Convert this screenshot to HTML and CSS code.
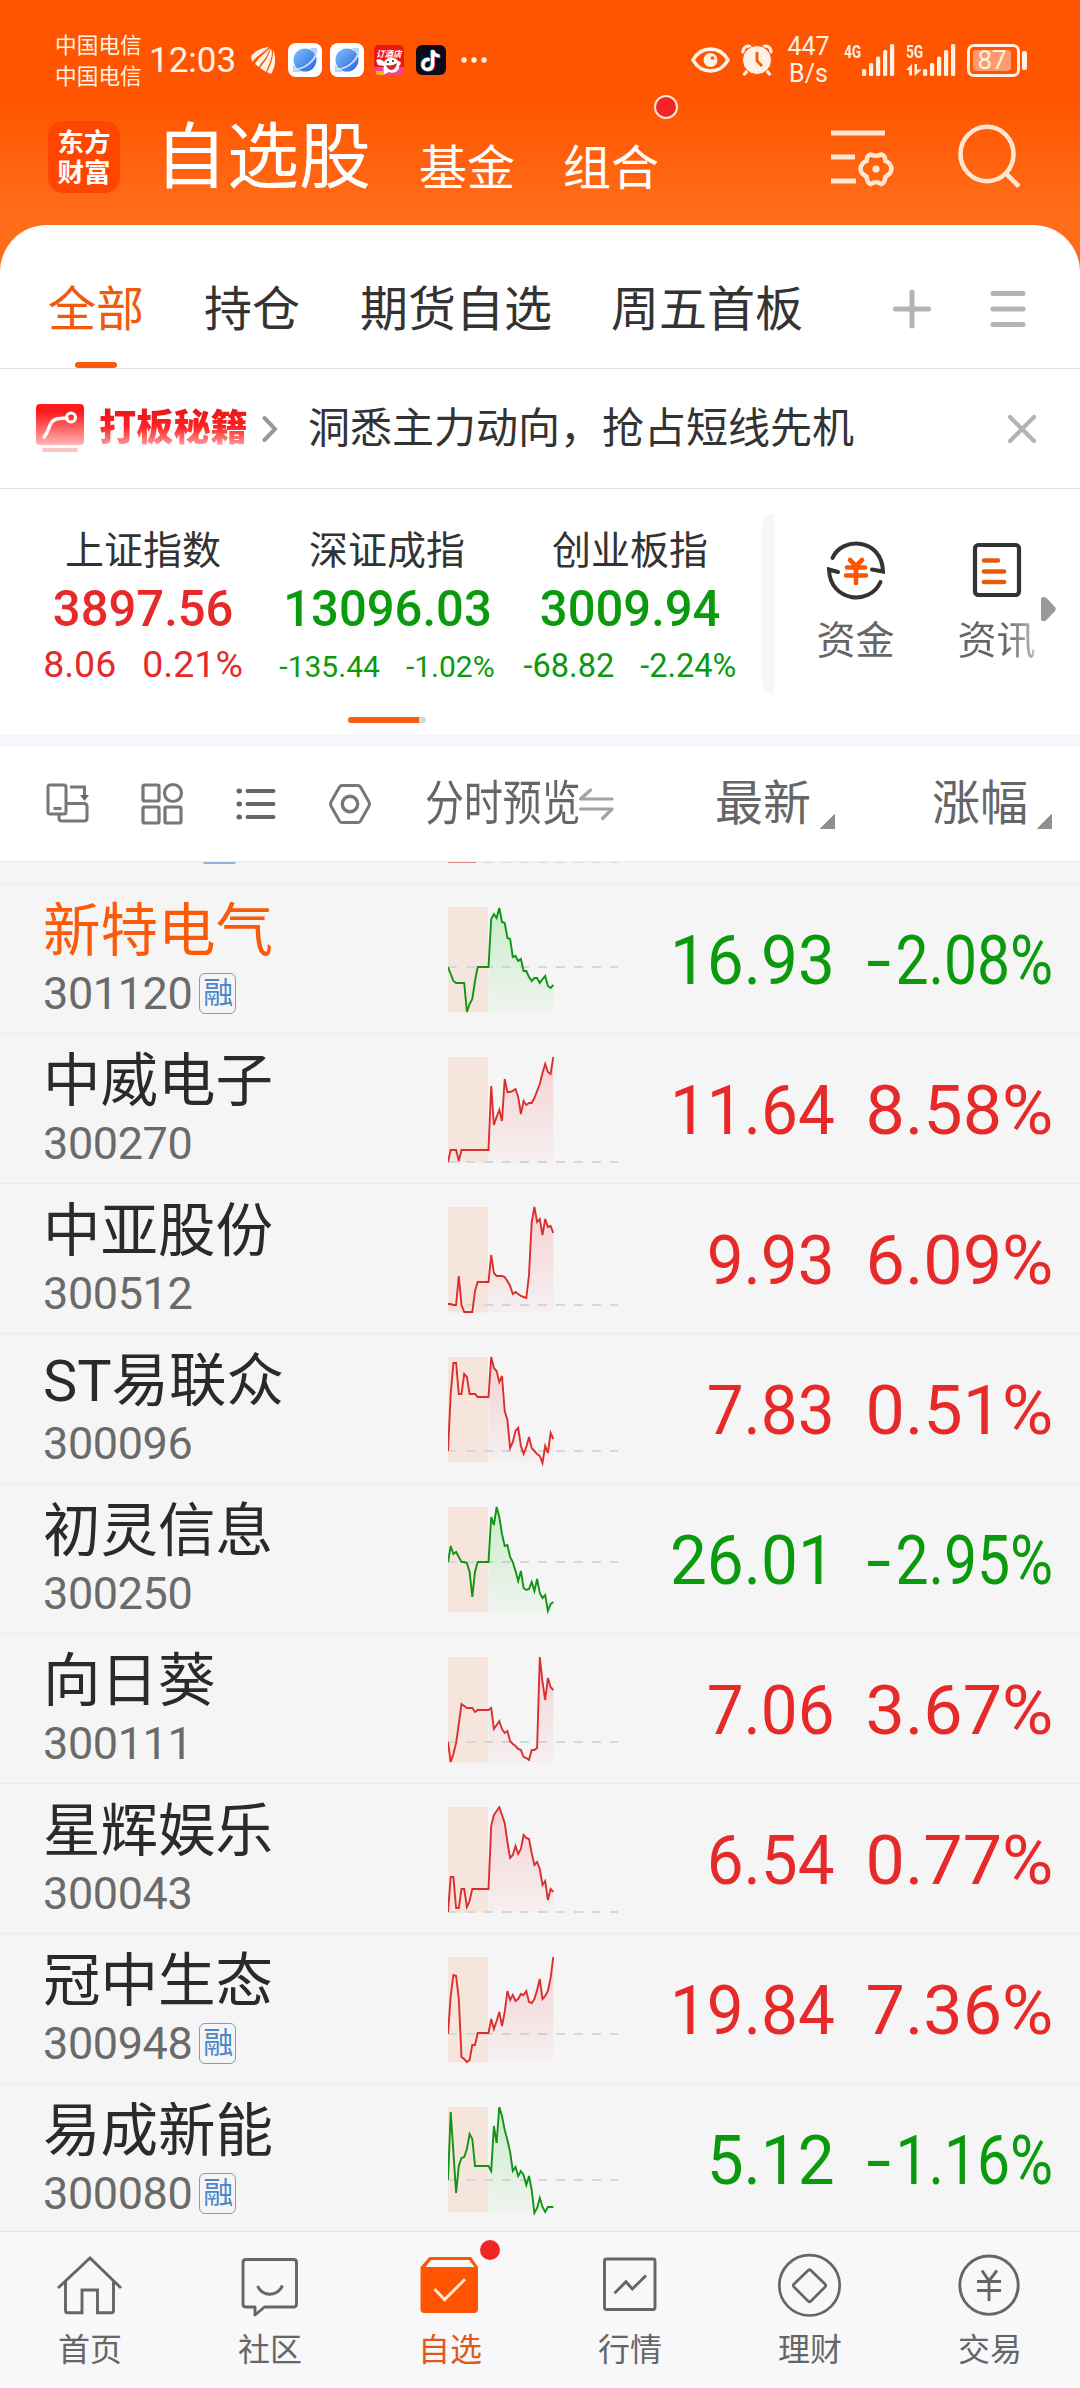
FILE: index.html
```html
<!DOCTYPE html>
<html lang="zh-CN">
<head>
  <meta charset="utf-8">
  <title>自选股</title>
  <link rel="stylesheet" href="styles.css">
</head>
<body>
  <div class="top">
    <div class="statusbar">
      <div class="carrier"><span>中国电信</span><span>中国电信</span></div>
      <span class="clock">12:03</span>
      <svg class="st-wing" width="24" height="28" viewBox="0 0 24 28" fill="#fff1e4">
        <path d="M0 10C6 3 12 2 18 1C13 6 6 10 1 16Z"/>
        <path d="M4 18C7 12 14 7 19 2C17 11 11 15 8 21Z"/>
        <path d="M9 22C13 16 18 11 20 2C23 9 18 18 15 26Z"/>
        <path d="M16 26C20 18 22 13 22 4C26 12 24 22 20 28Z"/>
      </svg>
      <svg class="st-app" width="34" height="34" viewBox="0 0 34 34">
        <rect width="34" height="34" rx="8" fill="#fff"/>
        <path d="M22 5h7v8zM5 22v7h8z" fill="#b9d0f8"/>
        <circle cx="17" cy="17" r="11.5" fill="url(#globe)"/>
        <path d="M6 26C16 27 27 18 29 8" fill="none" stroke="#cfe3ff" stroke-width="1.8"/>
        <defs>
          <linearGradient id="globe" x1="0" y1="0" x2="1" y2="1">
            <stop offset="0" stop-color="#7cc4ff"/><stop offset="1" stop-color="#2b62d9"/>
          </linearGradient>
        </defs>
      </svg>
      <svg class="st-app" width="34" height="34" viewBox="0 0 34 34">
        <rect width="34" height="34" rx="8" fill="#fff"/>
        <path d="M22 5h7v8zM5 22v7h8z" fill="#b9d0f8"/>
        <circle cx="17" cy="17" r="11.5" fill="url(#globe)"/>
        <path d="M6 26C16 27 27 18 29 8" fill="none" stroke="#cfe3ff" stroke-width="1.8"/>
      </svg>
      <svg class="st-shop" width="30" height="30" viewBox="0 0 30 30">
        <defs><clipPath id="shop"><rect width="30" height="30" rx="5"/></clipPath></defs>
        <g clip-path="url(#shop)">
          <rect width="30" height="30" fill="#f01414"/>
          <path d="M0 22h30v8H0z" fill="#f0468c"/>
          <text x="2" y="12" class="shop-text">订酒店</text>
          <path d="M2 15C5 13 9 15 10 17C12 12 21 11 24 16C27 16 28 19 25 21C26 26 20 29 15 27L9 30C10 26 9 24 10 21L4 20Z" fill="#fff"/>
          <path d="M12 20C16 21 20 20 23 18C22 23 20 25 17 25C14 24 13 23 12 20Z" fill="#d8262e"/>
          <circle cx="14" cy="17" r="1" fill="#222"/><circle cx="19" cy="16" r="1" fill="#222"/>
          <path d="M2 26h8v4H2z" fill="#f7b413"/>
        </g>
      </svg>
      <svg class="st-tiktok" width="30" height="30" viewBox="0 0 30 30" fill="none" stroke-width="3.2">
        <rect width="30" height="30" rx="6" fill="#0d0b1a"/>
        <path d="M13 14C8 13.500 5.500 17 6.500 21C8 25.500 15.500 25 16 19V5C17 8.500 19.500 10.500 23 10.500" stroke="#25e5e0"/>
        <path d="M14.500 15C9.500 14.500 7 18 8 22C9.500 26.500 17 26 17.500 20V6C18.500 9.500 21 11.500 24.500 11.500" stroke="#fb2d55"/>
        <path d="M13.700 14.500C8.700 14 6.200 17.500 7.200 21.500C8.700 26 16.200 25.500 16.700 19.500V5.500C17.700 9 20.200 11 23.700 11" stroke="#fff"/>
      </svg>
      <svg class="st-more" width="28" height="8" viewBox="0 0 28 8" fill="#fff1e4">
        <circle cx="4" cy="4" r="2.700"/><circle cx="14" cy="4" r="2.700"/><circle cx="24" cy="4" r="2.700"/>
      </svg>

      <div class="status-right">
        <svg width="39" height="26" viewBox="0 0 39 26">
          <path d="M2 13C10 -1.500 29 -1.500 37 13C29 27.500 10 27.500 2 13Z" fill="none" stroke="#fff1e4" stroke-width="3.600"/>
          <circle cx="19.500" cy="13" r="7" fill="#fff1e4"/>
          <circle cx="21.500" cy="11" r="1.800" fill="#ff5500"/>
        </svg>
        <svg class="st-alarm" width="32" height="32" viewBox="0 0 32 32">
          <g stroke="#fff1e4" stroke-width="3.200" stroke-linecap="round" fill="none">
            <path d="M2 8C2 3 6 1.500 9 2.500M30 8C30 3 26 1.500 23 2.500M7 26L3.500 30M25 26L28.500 30"/>
          </g>
          <circle cx="16" cy="16" r="14.500" fill="#fff1e4" stroke="#ff5500"/>
          <path d="M16 8v9l5 5" fill="none" stroke="#ff5500" stroke-width="2.800"/>
        </svg>
        <div class="speed"><span>447</span><span>B/s</span></div>
        <div class="signal">
          <span class="net">4G</span>
          <svg width="33" height="32" viewBox="0 0 33 32" fill="#fff1e4">
            <rect x="0" y="25" width="4.200" height="7" rx="1.500"/><rect x="7" y="19" width="4.200" height="13" rx="1.500"/><rect x="14" y="12.500" width="4.200" height="19.500" rx="1.500"/><rect x="21" y="6" width="4.200" height="26" rx="1.500"/><rect x="28" y="0" width="4.200" height="32" rx="1.500"/>
          </svg>
        </div>
        <div class="signal signal-5g">
          <div class="net-box">
            <span class="net">5G</span>
            <svg width="16" height="12" viewBox="0 0 16 12" fill="#fff1e4"><path d="M0 6L6 0V11.500H3.200V6ZM8.500 0H11V5.500H16L8.500 12Z"/></svg>
          </div>
          <svg width="33" height="32" viewBox="0 0 33 32" fill="#fff1e4">
            <rect x="0" y="25" width="4.200" height="7" rx="1.500"/><rect x="7" y="19" width="4.200" height="13" rx="1.500"/><rect x="14" y="12.500" width="4.200" height="19.500" rx="1.500"/><rect x="21" y="6" width="4.200" height="26" rx="1.500"/><rect x="28" y="0" width="4.200" height="32" rx="1.500"/>
          </svg>
        </div>
        <div class="battery"><span>87</span></div>
        <i class="battery-tip"></i>
      </div>
    </div>

    <div class="header">
      <div class="logo"><span>东方</span><span>财富</span></div>
      <span class="title">自选股</span>
      <span class="nav nav-fund">基金</span>
      <span class="nav nav-group">组合<i class="dot"></i></span>
      <svg class="ic-filter" width="64" height="60" viewBox="0 0 64 60" fill="none" stroke="#ffe6d2">
        <path d="M0 5H54M0 29H24M0 53H25" stroke-width="5"/>
        <path d="M40 26.500Q45 29 50 26.500Q54 27 54.500 33Q60 35 60.500 41Q60 46 54.500 48.500Q54 55 50 56Q45 52.500 40 56Q36 55 35.500 48.500Q30 46 29.500 41Q30 35 35.500 33Q36 27 40 26.500Z" stroke-width="4.500"/>
        <circle cx="45" cy="41" r="3.600" fill="#ffe6d2" stroke="none"/>
      </svg>
      <svg class="ic-search" width="64" height="66" viewBox="0 0 64 66" fill="none" stroke="#ffe6d2" stroke-width="4.600">
        <ellipse cx="29" cy="30" rx="26.500" ry="27.200"/>
        <path d="M47.500 49L61 62.500"/>
      </svg>
    </div>
  </div>

  <div class="sheet">
    <div class="tabs">
      <span class="tab active">全部</span>
      <span class="tab">持仓</span>
      <span class="tab">期货自选</span>
      <span class="tab">周五首板</span>
      <svg class="ic-plus" width="40" height="40" viewBox="0 0 40 40" stroke="#b3b3b3" stroke-width="5" stroke-linecap="round"><path d="M20 3V37M3.500 20H36.500"/></svg>
      <svg class="ic-menu" width="36" height="40" viewBox="0 0 36 40" stroke="#b3b3b3" stroke-width="5" stroke-linecap="round"><path d="M3 4.500H33M3 20H33M3 35.500H33"/></svg>
    </div>

    <div class="banner">
      <svg class="ic-secret" width="48" height="48" viewBox="0 0 48 48">
        <defs>
          <linearGradient id="secret" x1="0" y1="0" x2="0" y2="1">
            <stop offset=".2" stop-color="#ff1a1e"/><stop offset="1" stop-color="#ffb4b4"/>
          </linearGradient>
        </defs>
        <rect width="48" height="41" rx="4" fill="url(#secret)"/>
        <path d="M8 33C14 27 12 15 24 14.500L31 14" fill="none" stroke="#fff" stroke-width="3.400" stroke-linecap="round"/>
        <circle cx="35" cy="13.500" r="4.500" fill="none" stroke="#fff" stroke-width="3"/>
        <rect x="6" y="44" width="36" height="4" rx="2" fill="#f9c4c4"/>
      </svg>
      <span class="banner-tag">打板秘籍</span>
      <svg class="ic-chevron" width="16" height="28" viewBox="0 0 16 28" fill="none" stroke="#999" stroke-width="4" stroke-linecap="round"><path d="M2.500 3L13 14L2.500 25"/></svg>
      <span class="banner-text">洞悉主力动向，抢占短线先机</span>
      <svg class="ic-close" width="30" height="30" viewBox="0 0 30 30" stroke="#b3b3b3" stroke-width="4.200" stroke-linecap="round"><path d="M3 3L27 27M27 3L3 27"/></svg>
    </div>

    <div class="indices">
      <div class="index up">
        <span class="index-name">上证指数</span>
        <span class="index-value">3897.56</span>
        <span class="index-change">8.06<b>0.21%</b></span>
      </div>
      <div class="index down">
        <span class="index-name">深证成指</span>
        <span class="index-value">13096.03</span>
        <span class="index-change small">-135.44<b>-1.02%</b></span>
      </div>
      <div class="index down">
        <span class="index-name">创业板指</span>
        <span class="index-value">3009.94</span>
        <span class="index-change medium">-68.82<b>-2.24%</b></span>
      </div>
      <i class="index-divider"></i>
      <div class="shortcut">
        <svg width="64" height="64" viewBox="0 0 64 64" fill="none">
          <path d="M8.500 20C18 -2 58 0 59 33.500L48 31.500" stroke="#333" stroke-width="4" stroke-linecap="round"/>
          <path d="M56.500 44C46 68 6 64 5 31.500L14 34" stroke="#333" stroke-width="4" stroke-linecap="round"/>
          <path d="M26 22L32 28L38 22M23 29.500H41M22 37.500H42M32 28V45" stroke="#ff5500" stroke-width="4.600" stroke-linecap="round"/>
        </svg>
        <span>资金</span>
      </div>
      <div class="shortcut shortcut-news">
        <svg width="64" height="64" viewBox="0 0 64 64" fill="none">
          <rect x="10" y="7" width="44" height="50" rx="3.500" stroke="#333" stroke-width="4.200"/>
          <path d="M19 22.500H33M19 33.500H39M19 44H39" stroke="#e8590f" stroke-width="4.600" stroke-linecap="round"/>
        </svg>
        <span>资讯</span>
      </div>
      <svg class="ic-next" width="15" height="24" viewBox="0 0 15 24" fill="#999"><path d="M0 2Q0 0 3 0Q5 0 6 1.500L14 10Q15.500 12 14 14L6 22.500Q5 24 3 24Q0 24 0 22Z"/></svg>
      <i class="pager"></i>
    </div>

    <div class="toolbar">
      <svg class="tool" width="44" height="44" viewBox="0 0 44 44" fill="none" stroke="#777" stroke-width="3">
        <rect x="2" y="3" width="18" height="29" rx="2"/><path d="M7.500 26.500H15.500M13 33V36Q13 39 16 39H38Q41 39 41 36V24.500Q41 21.500 38 21.500H21"/><path d="M24 5H38.500V14"/><path d="M34 13H43L38.500 19Z" fill="#666" stroke="none"/>
      </svg>
      <svg class="tool" width="44" height="44" viewBox="0 0 44 44" fill="none" stroke="#777" stroke-width="3.200">
        <rect x="3" y="3" width="16" height="16" rx="1.500"/><circle cx="33" cy="11" r="8.500"/><rect x="3" y="25" width="16" height="16" rx="1.500"/><rect x="25" y="25" width="16" height="16" rx="1.500"/>
      </svg>
      <svg class="tool" width="44" height="44" viewBox="0 0 44 44" fill="none" stroke="#666" stroke-width="4" stroke-linecap="round">
        <path d="M13.500 9H39.500M13.500 22H39.500M13.500 35H39.500"/><path d="M5 9H5.500M5 22H5.500M5 35H5.500" stroke-width="5"/>
      </svg>
      <svg class="tool" width="44" height="44" viewBox="0 0 44 44" fill="none" stroke="#777" stroke-width="3">
        <path d="M14 3.500H30Q31.500 3.500 32.500 5L41 20Q42 22 41 24L32.500 39Q31.500 40.500 30 40.500H14Q12.500 40.500 11.500 39L3 24Q2 22 3 20L11.500 5Q12.500 3.500 14 3.500Z"/><circle cx="22" cy="22" r="7.700" stroke-width="3.400"/>
      </svg>
      <span class="preview">分时预览</span>
      <svg class="ic-swap" width="36" height="34" viewBox="0 0 36 34" fill="none" stroke="#a3a3a3" stroke-width="3.200" stroke-linecap="round" stroke-linejoin="round"><path d="M12.500 3L2.500 12H34M2.500 22H34L24.500 31.500"/></svg>
      <span class="sort sort-price">最新</span>
      <i class="corner"></i>
      <span class="sort sort-rate">涨幅</span>
      <i class="corner"></i>
    </div>

    <div class="list">
      <div class="cut-row"><i class="cut-badge"></i><i class="cut-line"></i><i class="cut-dash"></i></div>
      <div id="stocks"></div>
    </div>
  </div>

  <div class="tabbar">
    <div class="tabbar-item">
      <svg width="70" height="70" viewBox="0 0 70 70" fill="none" stroke="#666" stroke-width="2.900"><path d="M3 38L35 8L66 38M10.500 31V60.500Q10.500 62.700 12.500 62.700H27V40H42.500V62.700H56.500Q58.500 62.700 58.500 60.500V31"/></svg>
      <span>首页</span>
    </div>
    <div class="tabbar-item">
      <svg width="70" height="70" viewBox="0 0 70 70" fill="none" stroke="#666" stroke-width="2.900" stroke-linejoin="round"><path d="M11 9.500H58.500Q61.500 9.500 61.500 12.500V54Q61.500 57 58.500 57H29.500L20 65V57H11Q8 57 8 54V12.500Q8 9.500 11 9.500Z"/><path d="M22.500 36C28 47 42 47 47.500 35.500"/></svg>
      <span>社区</span>
    </div>
    <div class="tabbar-item active">
      <svg width="70" height="70" viewBox="0 0 70 70">
        <path d="M14.500 7H56L63 17V59Q63 63 59 63H9.500Q5.500 63 5.500 59V17Z" fill="#ff5500"/>
        <path d="M16 10H54L59.500 17H10.500Z" fill="#f8f8fa"/>
        <path d="M19.500 39L29.600 49.500L50 29.300" fill="none" stroke="#ffe9d8" stroke-width="3"/>
      </svg>
      <span>自选</span>
      <i class="dot"></i>
    </div>
    <div class="tabbar-item">
      <svg width="70" height="70" viewBox="0 0 70 70" fill="none" stroke="#666" stroke-width="2.900"><rect x="9.500" y="9" width="50.500" height="50.500" rx="2"/><path d="M19.500 43.300L31 31.700L37.300 39L51 25.500"/></svg>
      <span>行情</span>
    </div>
    <div class="tabbar-item">
      <svg width="70" height="70" viewBox="0 0 70 70" fill="none" stroke="#666" stroke-width="2.700"><circle cx="34.500" cy="35.300" r="30.200"/><path d="M33 20.500Q34.500 19 36 20.500L50 34Q51.500 35.500 50 37L36 51Q34.500 52.500 33 51L19 37Q17.500 35.500 19 34Z"/></svg>
      <span>理财</span>
    </div>
    <div class="tabbar-item">
      <svg width="70" height="70" viewBox="0 0 70 70" fill="none" stroke="#666" stroke-width="2.900"><circle cx="34" cy="35.200" r="29.200"/><path d="M27 20.500L34 31L42 20.500M22 31.500H46M22 40.500H46M34 31V51"/></svg>
      <span>交易</span>
    </div>
  </div>

  <script>
    // line: 40 samples, distance from the top of the chart; base: previous close
    const stocks = [
      { name: '新特电气', code: '301120', margin: true, picked: true, price: '16.93', rate: '-2.08%', base: 60,
        line: [60,67,74,76,76,76,76,105,97,92,74,60,60,60,60,60,12,7,11,1,15,16,31,32,50,49,54,52,64,64,70,74,71,71,76,72,69,79,81,78] },
      { name: '中威电子', code: '300270', price: '11.64', rate: '8.58%', base: 105,
        line: [105,93,93,93,104,93,93,93,93,93,93,93,93,93,93,93,29,68,60,53,64,22,35,35,34,32,40,57,44,48,46,46,41,34,27,16,7,15,17,0] },
      { name: '中亚股份', code: '300512', price: '9.93', rate: '6.09%', base: 98,
        line: [97,97,98,98,69,98,105,105,105,105,84,75,75,75,75,75,48,66,69,69,69,70,74,79,87,85,87,89,90,91,68,15,0,15,12,28,12,20,19,26] },
      { name: 'ST易联众', code: '300096', price: '7.83', rate: '0.51%', base: 94,
        line: [94,37,6,6,37,37,17,20,37,37,37,40,40,40,40,40,0,11,14,25,19,54,63,91,85,74,71,89,97,90,80,91,94,97,99,106,89,96,76,82] },
      { name: '初灵信息', code: '300250', price: '26.01', rate: '-2.95%', base: 55,
        line: [55,39,47,45,50,55,55,56,65,90,65,55,55,55,55,55,10,18,0,10,27,39,38,50,55,64,74,64,81,83,82,75,84,72,86,91,88,104,97,95] },
      { name: '向日葵', code: '300111', price: '7.06', rate: '3.67%', base: 85,
        line: [85,105,97,86,67,47,49,51,51,51,55,53,53,53,53,53,51,72,68,64,72,76,74,84,87,89,92,93,100,101,103,93,93,91,0,25,43,21,30,33] },
      { name: '星辉娱乐', code: '300043', price: '6.54', rate: '0.77%', base: 105,
        line: [105,70,70,101,101,82,82,100,94,82,82,82,82,82,82,82,19,8,4,0,8,16,35,51,48,39,47,42,28,31,32,46,58,55,62,78,74,93,82,85] },
      { name: '冠中生态', code: '300948', margin: true, price: '19.84', rate: '7.36%', base: 77,
        line: [77,39,18,19,42,100,102,105,103,88,88,76,76,76,76,76,62,72,64,55,69,55,34,43,38,44,42,37,38,34,45,46,42,33,22,42,39,34,21,0] },
      { name: '易成新能', code: '300080', margin: true, price: '5.12', rate: '-1.16%', base: 73,
        line: [73,5,45,86,59,51,50,42,27,32,59,59,59,59,59,59,64,19,36,0,9,23,33,45,64,60,69,64,68,78,69,83,106,101,91,100,105,100,100,100] }
    ];

    const OPEN = 15; // first sample after the call auction

    function drawChart(stock, down, id) {
      const color = down ? '#0f9413' : '#dc2f2d';
      const fill = down ? '#8fe08f' : '#f5a0a5';
      const points = stock.line.map((y, i) => (i * 2.7).toFixed(1) + ',' + (y + 1));
      const area = '40.5,106.5 ' + points.slice(OPEN).join(' ') + ' 105.3,106.5';
      return `<svg class="chart" width="172" height="110" viewBox="0 0 172 110">
        <defs><linearGradient id="fill${id}" gradientUnits="userSpaceOnUse" x1="0" y1="0" x2="0" y2="106">
          <stop offset="0" stop-color="${fill}" stop-opacity=".42"/><stop offset="1" stop-color="${fill}" stop-opacity=".06"/>
        </linearGradient></defs>
        <rect x="0" y="1" width="40" height="105.500" fill="#f6e5dd"/>
        <path d="M0 ${stock.base + 1}H170" stroke="#d4d7dc" stroke-width="2" stroke-dasharray="9 9"/>
        <polygon points="${area}" fill="url(#fill${id})"/>
        <polyline points="${points.join(' ')}" fill="none" stroke="${color}" stroke-width="1.900"/>
      </svg>`;
    }

    document.getElementById('stocks').innerHTML = stocks.map((stock, i) => {
      const down = stock.rate[0] === '-';
      const rate = down ? '<i class="minus">-</i>' + stock.rate.slice(1) : stock.rate;
      return `<div class="stock ${down ? 'down' : 'up'}">
        <div class="stock-info">
          <div class="stock-name${stock.picked ? ' picked' : ''}">${stock.name}</div>
          <div class="stock-code">${stock.code}${stock.margin ? '<span class="badge">融</span>' : ''}</div>
        </div>
        ${drawChart(stock, down, i)}
        <div class="price"><span>${stock.price}</span></div>
        <div class="rate"><span>${rate}</span></div>
      </div>`;
    }).join('');
  </script>
</body>
</html>
```
FILE: styles.css
```css
* {
  box-sizing: border-box;
}

body {
  margin: 0;
  width: 1080px;
  height: 2388px;
  overflow: hidden;
  display: flex;
  flex-direction: column;
  background: #ff6d1a;
  font-family: Roboto, "Noto Sans CJK SC", sans-serif;
  color: #333;
}

i {
  font-style: normal;
}

b {
  font-weight: inherit;
}

svg {
  display: block;
  flex: none;
}

span {
  white-space: nowrap;
}

.up {
  color: #e62a2a;
}

.down {
  color: #0b9a0e;
}

.top {
  flex: none;
  height: 225px;
  background: linear-gradient(#ff5500 0, #ff5500 100px, #ff6d1a 215px);
}

/* status bar */
.statusbar {
  height: 112px;
  padding: 8px 53px 0 55px;
  display: flex;
  align-items: center;
  color: #fff1e4;
}

.carrier {
  width: 94px;
  display: flex;
  flex-direction: column;
  font-size: 21.7px;
  line-height: 31px;
  padding-top: 2px;
}

.clock {
  width: 102px;
  font-size: 35px;
}

.st-wing {
  margin-right: 13px;
}

.st-app {
  margin-right: 8px;
}

.st-shop {
  margin-left: 2px;
}

.shop-text {
  font: italic 700 8.5px "Noto Sans CJK SC", sans-serif;
  fill: #fff;
}

.st-tiktok {
  margin: 0 14px 0 12px;
}

.status-right {
  display: flex;
  align-items: center;
  margin-left: auto;
}

.st-alarm {
  margin: 0 15px 0 11px;
}

.speed {
  display: flex;
  flex-direction: column;
  align-items: center;
  width: 41px;
  margin-right: 15px;
  font-size: 25px;
  line-height: 27px;
}

.signal {
  display: flex;
  height: 32px;
  margin-right: 11px;
}

.net {
  display: block;
  width: 18px;
  font: 700 18px/15px Roboto, sans-serif;
  transform: scaleX(.76);
  transform-origin: 0 50%;
}

.net-box {
  width: 17px;
  display: flex;
  flex-direction: column;
  justify-content: space-between;
}

.battery {
  width: 53px;
  height: 33px;
  padding: 3px 6px 3px 3px;
  border: 3px solid #fff1e4;
  border-radius: 7px;
}

.battery span {
  display: block;
  width: 38px;
  height: 21px;
  border-radius: 3px;
  background: #ff9a6a;
  font-size: 26px;
  line-height: 21px;
  text-align: center;
}

.battery-tip {
  width: 5px;
  height: 19px;
  margin-left: 2px;
  border-radius: 2px;
  background: #fff1e4;
}

/* header */
.header {
  display: flex;
  align-items: flex-start;
  padding-left: 48px;
  color: #fff;
}

.logo {
  width: 72px;
  height: 72px;
  margin-top: 9px;
  padding-top: 7px;
  display: flex;
  flex-direction: column;
  align-items: center;
  border-radius: 15px;
  background: #ff4600;
  font-size: 26.5px;
  font-weight: 700;
  line-height: 30px;
}

.title {
  width: 264px;
  margin: 10px 0 0 35px;
  font-size: 72px;
  line-height: 72px;
}

.nav {
  width: 144px;
  margin-top: 33px;
  font-size: 48px;
  line-height: 48px;
}

.nav-group {
  position: relative;
  width: 268px;
}

.dot {
  position: absolute;
  border-radius: 50%;
  background: #f32424;
}

.nav-group .dot {
  left: 91px;
  top: -50px;
  width: 24px;
  height: 24px;
  border: 2px solid #ffe8dc;
}

.ic-filter {
  margin-top: 16px;
}

.ic-search {
  margin: 12px 0 0 63px;
}

/* group tabs */
.sheet {
  flex: 1;
  min-height: 0;
  display: flex;
  flex-direction: column;
  border-radius: 47px 47px 0 0;
  background: #fff;
  overflow: hidden;
}

.tabs {
  flex: none;
  height: 144px;
  padding: 0 0 0 48px;
  display: flex;
  align-items: stretch;
  border-bottom: 1px solid #e4e4e4;
}

.tab {
  margin-right: 60px;
  padding-top: 26px;
  font-size: 48px;
  line-height: 118px;
}

.tab:nth-child(3) {
  margin-right: 59px;
}

.tab.active {
  display: flex;
  flex-direction: column;
  align-items: center;
  color: #f05a0c;
}

.tab.active::after {
  content: "";
  flex: none;
  width: 42px;
  height: 6px;
  margin-top: -7px;
  border-radius: 3px;
  background: #f8590b;
}

.ic-plus,
.ic-menu {
  margin-top: 64px;
}

.ic-plus {
  margin-left: 29px;
}

.ic-menu {
  margin-left: 58px;
}

/* banner */
.banner {
  flex: none;
  height: 120px;
  padding-left: 36px;
  padding-bottom: 2px;
  display: flex;
  align-items: center;
  border-bottom: 1px solid #e4e4e4;
}

.banner-tag {
  width: 164px;
  margin-left: 15px;
  font-size: 37.2px;
  font-weight: 900;
  line-height: 50px;
  background: linear-gradient(#e8181c 8px, #ff2222 24px, #ffa0a0 43px);
  -webkit-background-clip: text;
  background-clip: text;
  color: transparent;
}

.ic-chevron {
  margin: 2px 30px 0 -1px;
}

.banner-text {
  padding-top: 2px;
  font-size: 42px;
  line-height: 60px;
}

.ic-close {
  margin: 3px 0 0 153px;
}

/* indices */
.indices {
  position: relative;
  flex: none;
  height: 246px;
  padding: 24px 0 0 21px;
  display: flex;
  align-items: flex-start;
}

.index {
  width: 244px;
  display: flex;
  flex-direction: column;
  align-items: center;
}

.index:nth-child(3) {
  width: 242px;
}

.index:nth-child(3) + .index-divider {
  margin-left: auto;
}

.index-name {
  margin-top: 8px;
  font-size: 39px;
  line-height: 60px;
  color: #333;
}

.index-value {
  font-size: 50.5px;
  font-weight: 500;
  line-height: 55px;
  transform: scaleX(.97);
}

.index-change {
  font-size: 37.5px;
  line-height: 56px;
}

.index-change b {
  margin-left: 26px;
}

.index-change.small {
  font-size: 30px;
  line-height: 62px;
}

.index-change.medium {
  font-size: 32.5px;
  line-height: 60px;
}

.index-divider {
  width: 12px;
  height: 180px;
  margin-right: 42px;
  border-radius: 12px 0 0 12px;
  background: #f7f7fb;
}

.shortcut {
  width: 79px;
  margin: 25px 62px 0 0;
  display: flex;
  flex-direction: column;
  align-items: center;
  font-size: 39px;
  line-height: 60px;
  color: #666;
}

.shortcut span {
  margin-top: 9px;
}

.shortcut-news {
  margin-right: 5px;
}

.shortcut-news span {
  background: linear-gradient(to right, #666 60%, #bbb);
  -webkit-background-clip: text;
  background-clip: text;
  color: transparent;
}

.ic-next {
  margin: 84px 24px 0 0;
}

.pager {
  position: absolute;
  left: 348px;
  bottom: 12px;
  width: 78px;
  height: 6px;
  border-radius: 3px;
  background: linear-gradient(to right, #f55c10 71px, #d5d7da 71px);
}

/* list toolbar */
.toolbar {
  flex: none;
  height: 126px;
  padding-left: 46px;
  border-top: 12px solid #f5f7fa;
  display: flex;
  align-items: center;
  color: #666;
}

.tool {
  margin-right: 50px;
}

.preview {
  width: 156px;
  margin-left: 3px;
  font-size: 48px;
  line-height: 108px;
  transform: scaleX(.81);
  transform-origin: 0 50%;
}

.ic-swap {
  z-index: 1;
  margin-left: -3px;
}

.sort {
  width: 105px;
  font-size: 48px;
  line-height: 108px;
}

.sort-price {
  margin-left: 101px;
}

.sort-rate {
  margin-left: 97px;
}

.corner {
  width: 15px;
  height: 15px;
  margin-top: 35px;
  background: linear-gradient(135deg, transparent 50%, #8f8f94 50%);
}

/* stocks */
.list {
  flex: 1;
  min-height: 0;
  overflow: hidden;
  background: #f5f5f5;
}

.cut-row {
  height: 23px;
  padding-left: 203px;
  display: flex;
  border-top: 1px solid #ececec;
  border-bottom: 1px solid #ebebeb;
}

.cut-badge {
  width: 33px;
  height: 2px;
  margin-right: 212px;
  border-radius: 0 0 4px 4px;
  background: #8fb2de;
}

.cut-line {
  width: 28px;
  height: 1px;
  margin-right: 8px;
  background: #d98c8c;
}

.cut-dash {
  width: 134px;
  height: 1px;
  background: repeating-linear-gradient(to right, #dcdee2 0 9px, transparent 9px 18px);
}

.stock {
  height: 150px;
  padding-left: 43px;
  display: flex;
  align-items: center;
  border-bottom: 1px solid #ebebeb;
}

.stock-info {
  width: 405px;
  padding-top: 3px;
}

.stock-name {
  font-size: 57.5px;
  line-height: 64px;
  color: #2a2a2a;
}

.stock-name.picked {
  color: #fb5a08;
}

.stock-code {
  display: flex;
  align-items: center;
  height: 54px;
  margin-top: 2px;
  font-size: 45px;
  letter-spacing: -.4px;
  color: #6a6a6a;
}

.badge {
  width: 37px;
  height: 41px;
  margin-left: 7px;
  border: 1.5px solid #6f9fd6;
  border-radius: 6px;
  font-size: 30px;
  line-height: 38px;
  letter-spacing: 0;
  text-align: center;
  text-indent: 1px;
  color: #4a86c8;
}

.chart {
  margin-top: 4px;
}

.price,
.rate {
  padding-top: 4px;
  font-size: 68px;
  text-align: right;
}

.price {
  width: 215px;
}

.rate {
  width: 218px;
}

.price span,
.rate span {
  display: inline-block;
  transform-origin: 100% 50%;
}

.price span {
  transform: scaleX(.965);
}

.up .rate span {
  transform: scaleX(1.03);
}

.down .rate span {
  transform: scaleX(.865);
}

.minus {
  display: inline-block;
  margin-right: 10px;
  transform: scaleX(1.5);
}

/* bottom tab bar */
.tabbar {
  flex: none;
  height: 157px;
  display: flex;
  border-top: 1px solid #e2e2e4;
  background: #f8f8fa;
}

.tabbar-item {
  position: relative;
  flex: 1;
  padding-top: 18px;
  display: flex;
  flex-direction: column;
  align-items: center;
  font-size: 32px;
  line-height: 52px;
  color: #666;
}

.tabbar-item span {
  margin-top: 4px;
}

.tabbar-item.active {
  color: #e0591a;
}

.tabbar-item .dot {
  left: 120px;
  top: 8px;
  width: 20px;
  height: 20px;
}
```
